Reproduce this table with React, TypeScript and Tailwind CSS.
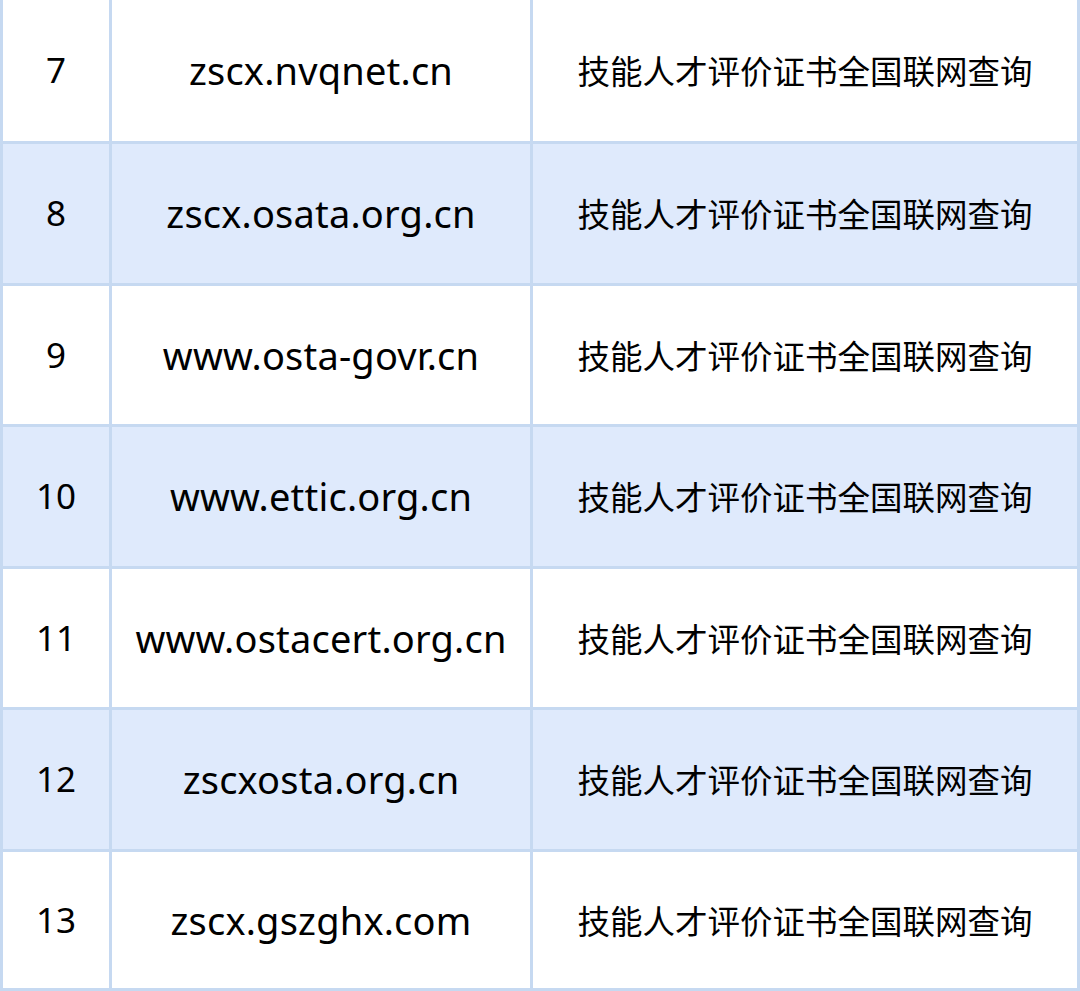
const rows = [
  { n: "7", url: "zscx.nvqnet.cn", h: "h-[144px]", shade: false },
  { n: "8", url: "zscx.osata.org.cn", h: "h-[142px]", shade: true },
  { n: "9", url: "www.osta-govr.cn", h: "h-[141px]", shade: false },
  { n: "10", url: "www.ettic.org.cn", h: "h-[142px]", shade: true },
  { n: "11", url: "www.ostacert.org.cn", h: "h-[141px]", shade: false },
  { n: "12", url: "zscxosta.org.cn", h: "h-[142px]", shade: true },
  { n: "13", url: "zscx.gszghx.com", h: "h-[139px]", shade: false },
];

export default function App() {
  return (
    <div className="w-[1080px] h-[991px] bg-white overflow-hidden">
      <div
        className="flex flex-col border-l-[3px] border-[#c6d9f1] text-black"
        style={{ fontFamily: '"Noto Sans", "Noto Sans CJK SC", sans-serif' }}
      >
        {rows.map((r) => (
          <div
            key={r.n}
            className={`grid grid-cols-[109px_421px_547px] border-b-[3px] border-[#c6d9f1] ${r.h} ${
              r.shade ? "bg-[#dfeafc]" : "bg-white"
            }`}
          >
            <div className="flex items-center justify-center border-r-[3px] border-[#c6d9f1] text-[35px]">
              {r.n}
            </div>
            <div className="flex items-center justify-center border-r-[3px] border-[#c6d9f1] text-[38px] tracking-[0.2px]">
              {r.url}
            </div>
            <div
              className="flex items-center justify-center border-r-[3px] border-[#c6d9f1] text-[32.5px]"
              style={{ fontFamily: '"Noto Sans CJK SC", sans-serif' }}
            >
              技能人才评价证书全国联网查询
            </div>
          </div>
        ))}
      </div>
    </div>
  );
}
